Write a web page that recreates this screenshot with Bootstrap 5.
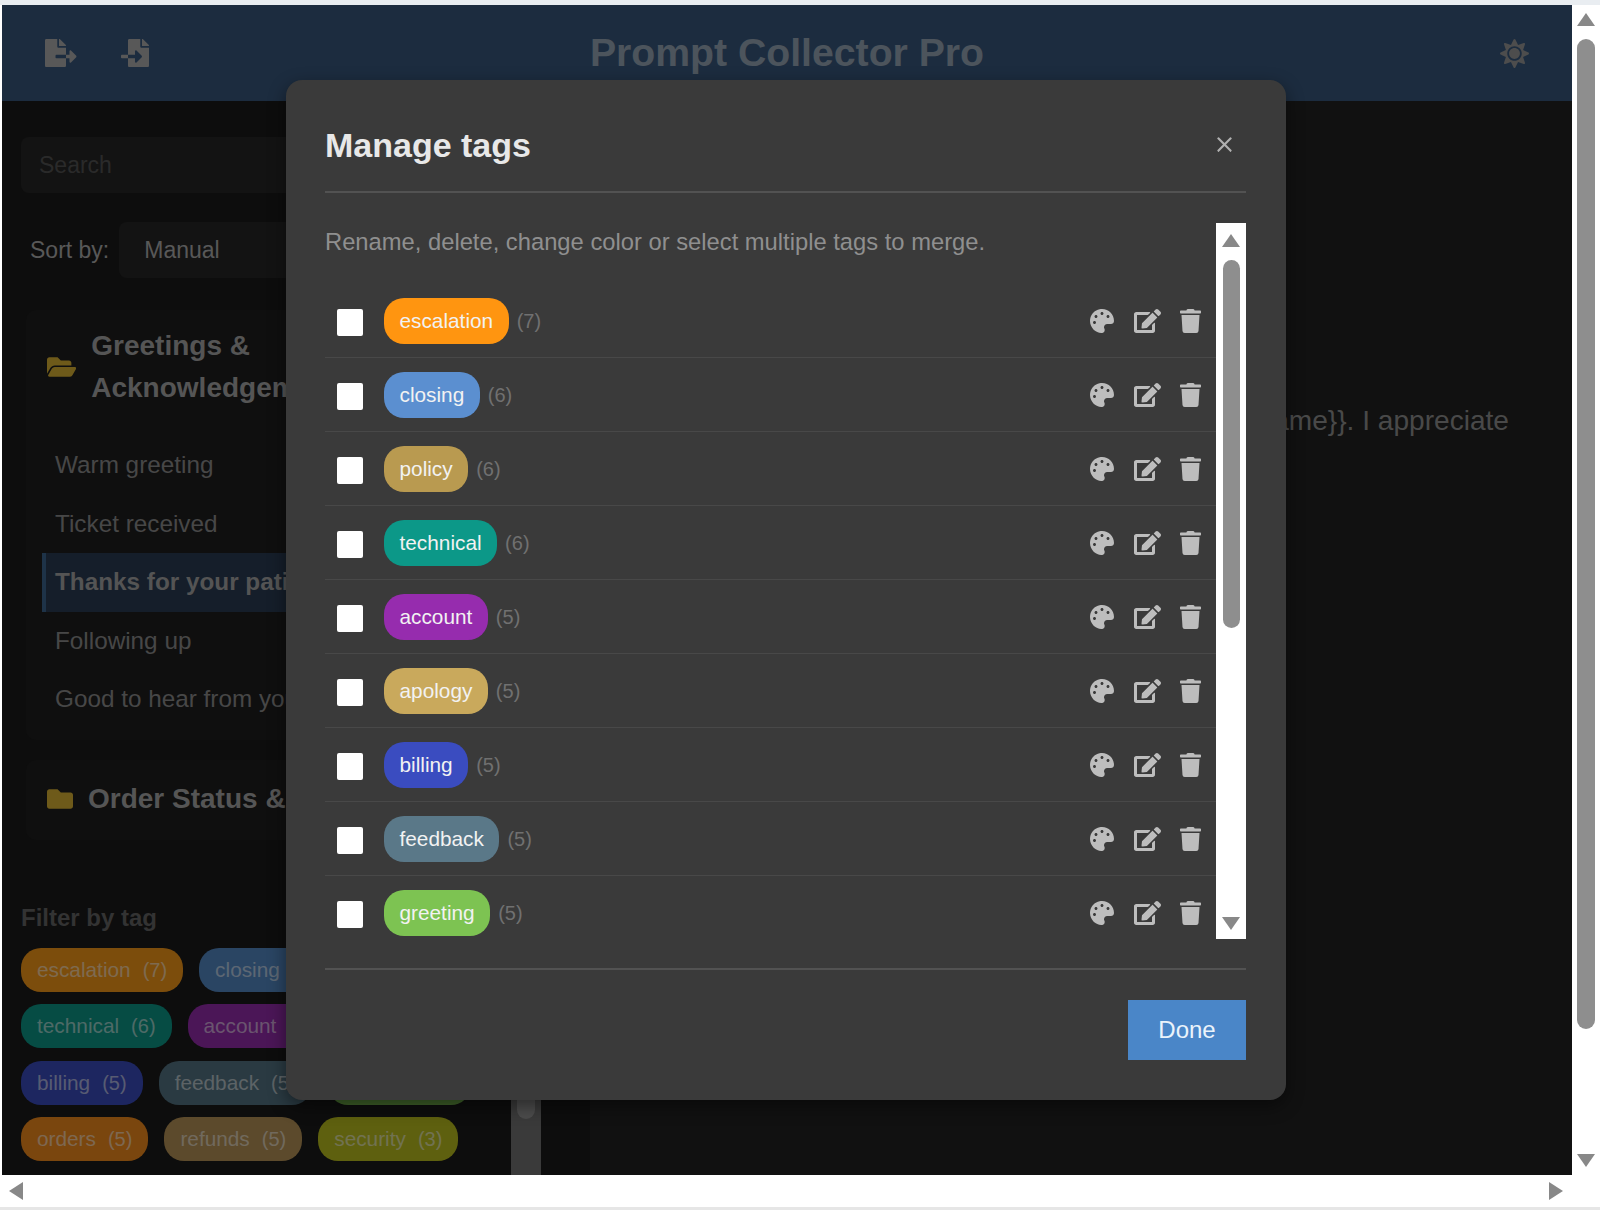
<!DOCTYPE html>
<html lang="en">

<head>
    <title>Prompt Collector Pro</title>
    <meta charset="utf-8">
    <meta name="viewport" content="width=device-width, initial-scale=1">
    <link href="https://cdn.jsdelivr.net/npm/bootstrap@5.3.3/dist/css/bootstrap.min.css" rel="stylesheet">
    <script src="https://cdn.jsdelivr.net/npm/bootstrap@5.3.3/dist/js/bootstrap.bundle.min.js"></script>
    <style>
        html, body { height: 1212px; overflow: hidden; }
        body { background: #fff; font-family: "Liberation Sans", Arial, sans-serif; }
        .top-strip { height: 5px; background: #e9edf1; }
        .screen { height: 1170px; }
        .app { width: 1570px; margin-left: 2px; background: #222; overflow: hidden; }

        /* fake browser scrollbars */
        .bar-v { width: 28px; background: #fff; }
        .bar-v .thumb { width: 18px; height: 990px; margin-top: 13px; background: #8e8e8e; border-radius: 9px; }
        .bar-h { height: 35px; background: #fff; padding: 0 37px 0 9px; border-bottom: 3px solid #e6e6e6; }
        .arrow-up, .arrow-down { width: 0; height: 0; border-left: 9px solid transparent; border-right: 9px solid transparent; }
        .arrow-up { border-bottom: 13px solid #888; }
        .arrow-down { border-top: 13px solid #888; }
        .arrow-left, .arrow-right { width: 0; height: 0; border-top: 9px solid transparent; border-bottom: 9px solid transparent; }
        .arrow-left { border-right: 14px solid #888; }
        .arrow-right { border-left: 14px solid #888; }

        /* app behind the modal */
        .app-nav { height: 96px; background: #38597f; padding: 0 43px; }
        .app-nav .side { flex: 1 1 0; }
        .app-nav .brand { font-size: 39.2px; font-weight: 700; color: #98a8b8; }
        .app-nav svg { fill: #b0b0b0; height: 28px; }
        .app-nav .gap-icons { gap: 44px; }
        .app-nav .sun { fill: #9a9a9a; height: 29px; }
        .sidebar { width: 588px; height: 1074px; background: #1a1a1a; }
        .side-scroll { width: 509px; padding: 36px 0 0 19px; overflow: hidden; }
        .side-track { width: 30px; background: #747474; padding: 0 6px; }
        .side-track .thumb { height: 1018px; background: #989898; border-radius: 9px; }
        .side-search { height: 56px; width: 470px; background: #262626; border-radius: 8px; color: #555; font-size: 23px; padding: 0 18px; line-height: 56px; }
        .sort-row { margin-top: 29px; height: 56px; padding-left: 9px; color: #b0b0b0; font-size: 23px; }
        .sort-select { width: 340px; height: 56px; margin-left: 10px; background: #262626; border-radius: 8px; padding: 0 25px; line-height: 56px; }
        .group { background: #1e1e1e; border-radius: 10px; margin: 0 21px 0 5px; padding: 15px 0 11px 0; }
        .group-open { margin-top: 32px; }
        .group-closed { margin-top: 20px; height: 80px; padding: 18px 0 0; }
        .group-title { font-size: 28px; font-weight: 700; line-height: 42px; color: #aaa; padding-left: 21px; }
        .group-title svg { fill: #dcb435; height: 26px; flex: none; margin-right: 15px; }
        .group-spacer { height: 27px; }
        .group-item { height: 58.5px; line-height: 58px; margin-left: 16px; padding-left: 9px; font-size: 24.3px; color: #8e8e8e; white-space: nowrap; border-left: 4px solid transparent; }
        .group-item.active { background: #2a3d54; border-left-color: #3d6690; color: #a8a8a8; font-weight: 700; }
        .filter-title { margin-top: 63px; font-size: 24px; font-weight: 700; line-height: 30px; color: #666; }
        .chip-wrap { margin-top: 15px; width: 500px; gap: 12.5px 16px; }
        .chip { height: 44px; line-height: 44px; padding: 0 16px; border-radius: 20px; font-size: 20.8px; font-weight: 400; color: rgba(255, 255, 255, .6); white-space: nowrap; }
        .chip small { font-size: 20px; margin-left: 12px; }
        .main-pane { padding: 300px 63px 0 0; font-size: 28.1px; line-height: 40px; color: #939393; white-space: nowrap; }

        /* modal sizes */
        .modal-backdrop.app-backdrop { position: absolute; width: 100%; height: 100%; background: #000; opacity: .5; }
        .tag-modal { position: absolute; left: 284px; top: 75px; width: 1000px; height: 1020px; background: #3a3a3a; border: 0; border-radius: 16px; box-shadow: 0 6px 18px rgba(0, 0, 0, .45); z-index: 1055; }
        .tag-modal .modal-header { height: 113px; padding: 0; margin: 0 40px 0 39px; border-bottom: 2px solid #525252; }
        .tag-modal .modal-title { font-size: 34px; font-weight: 700; color: #e8e8e8; line-height: 1; margin-top: 18px; }
        .tag-modal .btn-close { font-size: 17px; margin: 18px 13px 0 auto; padding: 0; opacity: .6; }
        .tag-modal .modal-body { height: 777px; flex: none; margin: 0 40px 0 39px; padding: 30px 0 29px; border-bottom: 2px solid #525252; }
        .tag-list { width: 891px; overflow: hidden; }
        .tag-intro { font-size: 23.76px; line-height: 36px; color: #8f8f8f; margin: 1px 0 24.5px; }
        .tag-row { height: 73.95px; flex: none; padding: 0 15px 0 12px; background: transparent; border: 0; border-bottom: 2px solid #484848; }
        .tag-row .form-check-input { width: 26px; height: 27px; margin: 4px 21px 0 0; background-color: #fff; border: 0; border-radius: 2px; flex: none; }
        .tag-chip { height: 46px; line-height: 46px; padding: 0 15.5px; border-radius: 20px; font-size: 20.8px; font-weight: 400; color: #f2f2f2; }
        .tag-count { font-size: 20px; color: #707070; margin-left: 8px; }
        .tag-actions { gap: 19.5px; }
        .tag-actions svg { fill: #bdbdbd; height: 24px; }
        .inner-bar { width: 30px; background: #fff; padding-top: 11px; }
        .inner-bar .thumb { width: 17px; height: 368px; margin-top: 13px; background: #8e8e8e; border-radius: 9px; }
        .inner-bar .arrow-down { margin-bottom: 9px; }
        .tag-modal .modal-footer { border: 0; padding: 30px 40px 0 0; }
        .btn-done { width: 118px; height: 60px; margin: 0; background: #4a86c8; color: #eaf3fb; border: 0; border-radius: 0; font-size: 24px; }
    </style>
</head>

<body>
    <div class="top-strip"></div>

    <div class="screen d-flex">
        <div class="app position-relative flex-shrink-0">
            <nav class="app-nav d-flex align-items-center">
                <div class="side d-flex align-items-center gap-icons">
                    <svg viewBox="0 0 576 512"><path d="M384 121.9c0-6.3-2.5-12.4-7-16.9L279.1 7c-4.5-4.5-10.6-7-17-7H256v128h128zM571 308l-95.7-96.4c-10.1-10.1-27.4-3-27.4 11.3V288h-64v64h64v65.2c0 14.3 17.3 21.4 27.4 11.3L571 332c6.6-6.6 6.6-17.4 0-24zm-379 28v-32c0-8.8 7.2-16 16-16h176V160H248c-13.2 0-24-10.8-24-24V0H24C10.7 0 0 10.7 0 24v464c0 13.3 10.7 24 24 24h336c13.3 0 24-10.7 24-24V352H208c-8.8 0-16-7.2-16-16z"/></svg>
                    <svg viewBox="0 0 512 512"><path d="M16 288c-8.8 0-16 7.2-16 16v32c0 8.8 7.2 16 16 16h112v-64zm489-183L407.1 7c-4.5-4.5-10.6-7-17-7H384v128h128v-6.1c0-6.3-2.5-12.4-7-16.9zm-153 31V0H152c-13.3 0-24 10.7-24 24v264h128v-65.2c0-14.3 17.3-21.4 27.4-11.3L379 308c6.6 6.7 6.6 17.4 0 24l-95.7 96.4c-10.1 10.1-27.4 3-27.4-11.3V352H128v136c0 13.3 10.7 24 24 24h336c13.3 0 24-10.7 24-24V160H376c-13.2 0-24-10.8-24-24z"/></svg>
                </div>
                <div class="brand">Prompt Collector Pro</div>
                <div class="side d-flex justify-content-end">
                    <svg class="sun" viewBox="0 0 512 512"><path d="M256 160c-52.9 0-96 43.1-96 96s43.1 96 96 96 96-43.1 96-96-43.1-96-96-96zm246.4 80.5l-94.7-47.3 33.5-100.4c4.5-13.6-8.4-26.5-21.9-21.9l-100.4 33.5-47.4-94.8c-6.4-12.8-24.6-12.8-31 0l-47.3 94.7L92.7 70.8c-13.6-4.5-26.5 8.4-21.9 21.9l33.5 100.4-94.7 47.4c-12.8 6.4-12.8 24.6 0 31l94.7 47.3-33.5 100.5c-4.5 13.6 8.4 26.5 21.9 21.9l100.4-33.5 47.3 94.7c6.4 12.8 24.6 12.8 31 0l47.3-94.7 100.4 33.5c13.6 4.5 26.5-8.4 21.9-21.9l-33.5-100.4 94.7-47.3c13-6.5 13-24.7.2-31.1zm-155.9 106c-49.9 49.9-131.1 49.9-181 0-49.9-49.9-49.9-131.1 0-181 49.9-49.9 131.1-49.9 181 0 49.9 49.9 49.9 131.1 0 181z"/></svg>
                </div>
            </nav>

            <div class="d-flex">
                <aside class="sidebar d-flex flex-shrink-0">
                    <div class="side-scroll flex-shrink-0">
                        <div class="side-search">Search</div>
                        <div class="sort-row d-flex align-items-center">
                            <span>Sort by:</span>
                            <div class="sort-select">Manual</div>
                        </div>

                        <div class="group group-open">
                            <div class="group-title d-flex align-items-center">
                                <svg viewBox="0 0 576 512"><path d="M572.694 292.093L500.27 416.248A63.997 63.997 0 0 1 444.989 448H45.025c-18.523 0-30.064-20.093-20.731-36.093l72.424-124.155A64 64 0 0 1 152 256h399.964c18.523 0 30.064 20.093 20.73 36.093zM152 224h328v-48c0-26.51-21.49-48-48-48H272l-64-64H48C21.49 64 0 85.49 0 112v278.046l69.077-118.418C86.214 242.25 117.989 224 152 224z"/></svg>
                                <span>Greetings &amp;<br>Acknowledgements</span>
                            </div>
                            <div class="group-spacer"></div>
                            <div class="group-item">Warm greeting</div>
                            <div class="group-item">Ticket received</div>
                            <div class="group-item active">Thanks for your patience</div>
                            <div class="group-item">Following up</div>
                            <div class="group-item">Good to hear from you</div>
                        </div>

                        <div class="group group-closed">
                            <div class="group-title d-flex align-items-center">
                                <svg viewBox="0 0 512 512"><path d="M464 128H272l-64-64H48C21.49 64 0 85.49 0 112v288c0 26.51 21.49 48 48 48h416c26.51 0 48-21.49 48-48V176c0-26.51-21.49-48-48-48z"/></svg>
                                <span>Order Status &amp; Updates</span>
                            </div>
                        </div>

                        <div class="filter-title">Filter by tag</div>
                        <div class="chip-wrap d-flex flex-wrap">
                            <span class="chip" style="background:#f99a18">escalation<small>(7)</small></span>
                            <span class="chip" style="background:#548ac6">closing<small>(6)</small></span>
                            <span class="chip" style="background:#b99a50">policy<small>(6)</small></span>
                            <span class="chip" style="background:#0c9888">technical<small>(6)</small></span>
                            <span class="chip" style="background:#962cae">account<small>(5)</small></span>
                            <span class="chip" style="background:#c9a95c">apology<small>(5)</small></span>
                            <span class="chip" style="background:#3a4cc0">billing<small>(5)</small></span>
                            <span class="chip" style="background:#547484">feedback<small>(5)</small></span>
                            <span class="chip" style="background:#7dc352">greeting<small>(5)</small></span>
                            <span class="chip" style="background:#f58c1c">orders<small>(5)</small></span>
                            <span class="chip" style="background:#b89458">refunds<small>(5)</small></span>
                            <span class="chip" style="background:#bcc01e">security<small>(3)</small></span>
                        </div>
                    </div>
                    <div class="side-track flex-shrink-0">
                        <div class="thumb"></div>
                    </div>
                </aside>
                <div class="main-pane flex-grow-1 text-end">Thanks for your patience, {{name}}. I appreciate</div>
            </div>

            <div class="modal-backdrop app-backdrop show"></div>

            <div class="modal-content tag-modal">
                <div class="modal-header">
                    <h5 class="modal-title">Manage tags</h5>
                    <button type="button" class="btn-close btn-close-white"></button>
                </div>
                <div class="modal-body d-flex">
                    <div class="tag-list d-flex flex-column">
                        <p class="tag-intro">Rename, delete, change color or select multiple tags to merge.</p>
                        <div id="rows" class="list-group list-group-flush"></div>
                    </div>
                    <div class="inner-bar d-flex flex-column align-items-center">
                        <div class="arrow-up"></div>
                        <div class="thumb"></div>
                        <div class="arrow-down mt-auto"></div>
                    </div>
                </div>
                <div class="modal-footer">
                    <button type="button" class="btn btn-done">Done</button>
                </div>
            </div>
        </div>

        <div class="bar-v d-flex flex-column align-items-center pt-2">
            <div class="arrow-up"></div>
            <div class="thumb"></div>
            <div class="arrow-down mt-auto mb-2"></div>
        </div>
    </div>

    <div class="bar-h d-flex align-items-center justify-content-between">
        <div class="arrow-left"></div>
        <div class="arrow-right"></div>
    </div>

    <script>
        var tags = [
            ["escalation", 7, "#ff9510"],
            ["closing", 6, "#5b8fd0"],
            ["policy", 6, "#b99a50"],
            ["technical", 6, "#0c9888"],
            ["account", 5, "#962cae"],
            ["apology", 5, "#c9a95c"],
            ["billing", 5, "#3a4cc0"],
            ["feedback", 5, "#5a7888"],
            ["greeting", 5, "#7dc352"]
        ];
        var palette = '<svg viewBox="0 0 512 512"><path d="M204.3 5C104.9 24.4 24.8 104.3 5.2 203.4c-37 187 131.7 326.4 258.8 306.7 41.2-6.4 61.4-54.6 42.5-91.7-23.1-45.4 9.9-98.4 60.9-98.4h79.7c35.8 0 64.8-29.6 64.9-65.3C511.5 97.1 368.1-26.9 204.3 5zM96 320c-17.7 0-32-14.3-32-32s14.3-32 32-32 32 14.3 32 32-14.3 32-32 32zm32-128c-17.7 0-32-14.3-32-32s14.3-32 32-32 32 14.3 32 32-14.3 32-32 32zm128-64c-17.7 0-32-14.3-32-32s14.3-32 32-32 32 14.3 32 32-14.3 32-32 32zm128 64c-17.7 0-32-14.3-32-32s14.3-32 32-32 32 14.3 32 32-14.3 32-32 32z"/></svg>';
        var edit = '<svg viewBox="0 0 576 512"><path d="M402.6 83.2l90.2 90.2c3.8 3.8 3.8 10 0 13.8L274.4 405.6l-92.8 10.3c-12.4 1.4-22.9-9.1-21.5-21.5l10.3-92.8L388.8 83.2c3.8-3.8 10-3.8 13.8 0zm162-22.9l-48.8-48.8c-15.2-15.2-39.9-15.2-55.2 0l-35.4 35.4c-3.8 3.8-3.8 10 0 13.8l90.2 90.2c3.8 3.8 10 3.8 13.8 0l35.4-35.4c15.2-15.3 15.2-40 0-55.2zM384 346.2V448H64V128h229.8c3.2 0 6.2-1.3 8.5-3.5l40-40c7.6-7.6 2.2-20.5-8.5-20.5H48C21.5 64 0 85.5 0 112v352c0 26.5 21.5 48 48 48h352c26.5 0 48-21.5 48-48V306.2c0-10.7-12.9-16-20.5-8.5l-40 40c-2.2 2.3-3.5 5.3-3.5 8.5z"/></svg>';
        var trash = '<svg viewBox="0 0 448 512"><path d="M432 32H312l-9.4-18.7A24 24 0 0 0 281.1 0H166.8a23.72 23.72 0 0 0-21.4 13.3L136 32H16A16 16 0 0 0 0 48v32a16 16 0 0 0 16 16h416a16 16 0 0 0 16-16V48a16 16 0 0 0-16-16zM53.2 467a48 48 0 0 0 47.9 45h245.8a48 48 0 0 0 47.9-45L416 128H32z"/></svg>';

        document.getElementById("rows").innerHTML = tags.map(function (t) {
            return '<div class="list-group-item tag-row d-flex align-items-center">' +
                '<input class="form-check-input" type="checkbox">' +
                '<span class="badge tag-chip" style="background:' + t[2] + '">' + t[0] + '</span>' +
                '<span class="tag-count">(' + t[1] + ')</span>' +
                '<div class="tag-actions d-flex align-items-center ms-auto">' + palette + edit + trash + '</div>' +
                '</div>';
        }).join("");
    </script>
</body>

</html>
